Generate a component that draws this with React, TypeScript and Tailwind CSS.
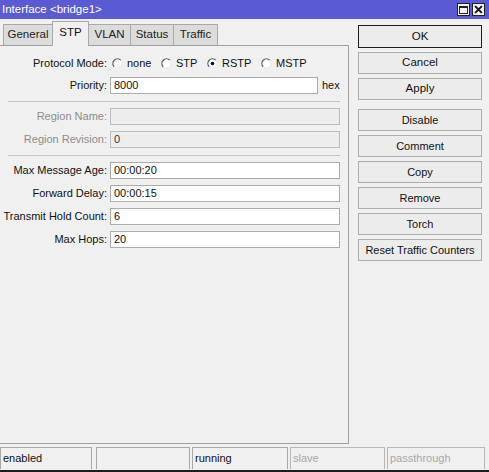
import React from 'react';

const tabs = [
  { name: 'General', w: 'w-[50px]' },
  { name: 'STP', w: 'w-[37px]', active: true },
  { name: 'VLAN', w: 'w-[43px]' },
  { name: 'Status', w: 'w-[44px]' },
  { name: 'Traffic', w: 'w-[45px]' },
];

const radios = [
  { label: 'none', w: 'w-[49px]' },
  { label: 'STP', w: 'w-[46px]' },
  { label: 'RSTP', w: 'w-[54px]', checked: true },
  { label: 'MSTP', w: 'w-[50px]' },
];

const actions = ['Disable', 'Comment', 'Copy', 'Remove', 'Torch', 'Reset Traffic Counters'];

function Radio({ checked }: { checked?: boolean }) {
  return (
    <svg width="11" height="11" viewBox="0 0 12 12" className="shrink-0">
      <circle cx="6" cy="6" r="5" fill="#ffffff" />
      <path d="M9.54 2.46 A5 5 0 0 0 2.46 9.54" fill="none" stroke="#5e5e5e" strokeWidth="1.4" />
      <path d="M2.46 9.54 A5 5 0 0 0 9.54 2.46" fill="none" stroke="#e4e4e4" strokeWidth="1" />
      {checked && <circle cx="6" cy="6" r="2" fill="#111" />}
    </svg>
  );
}

function Row({ label, value, disabled, wide = true, suffix }: { label: string; value: string; disabled?: boolean; wide?: boolean; suffix?: string }) {
  return (
    <div className="flex items-center h-[17px]">
      <div className={`w-[107px] text-right ${disabled ? 'text-[#8c8c8c]' : 'text-[#111]'}`}>{label}:</div>
      <div
        className={`ml-[3px] h-[17px] border flex items-center pl-[3px] ${wide ? 'w-[230px]' : 'w-[208px]'} ${
          disabled ? 'bg-[#ededed] border-[#bdbdbd] text-[#333]' : 'bg-white border-[#acacac] text-[#111]'
        }`}
      >
        {value}
      </div>
      {suffix && <span className="ml-[4px] text-[#111]">{suffix}</span>}
    </div>
  );
}

function Separator() {
  return <div className="ml-[8px] w-[332px] h-px bg-[#c4c4c4]" />;
}

export default function App() {
  return (
    <div className="w-[489px] h-[472px] bg-[#f0f0f0] font-['Liberation_Sans',Arial,sans-serif] text-[11px] flex flex-col overflow-hidden">
      {/* Title bar */}
      <div className="h-[19px] bg-[#5a5ad2] flex items-center justify-between pl-[2px] pr-[4px]">
        <span className="text-white text-[11.5px]">Interface &lt;bridge1&gt;</span>
        <div className="flex gap-[2px]">
          <div className="w-[13px] h-[13px] bg-[#f4f4f4] border border-[#222] flex items-center justify-center">
            <div className="w-[9px] h-[8px] border border-[#222] border-t-2" />
          </div>
          <div className="w-[13px] h-[13px] bg-[#f4f4f4] border border-[#222] flex items-center justify-center">
            <svg width="9" height="9" viewBox="0 0 8 8">
              <path d="M1 1 L7 7 M7 1 L1 7" stroke="#111" strokeWidth="1.8" />
            </svg>
          </div>
        </div>
      </div>

      <div className="flex flex-1">
        {/* Left: tabs + panel */}
        <div className="w-[349px] flex flex-col">
          <div className="h-[26px] flex items-end pl-[3px]">
            {tabs.map((t, i) => (
              <div
                key={t.name}
                className={`${t.w} ${i > 0 ? '-ml-px' : ''} flex items-center justify-center border-l border-t border-r border-[#a9a9a9] text-[11.5px] ${
                  t.active
                    ? 'h-[25px] -mb-px bg-[#f0f0f0] relative z-10 pb-[2px] text-[#111]'
                    : 'h-[21px] bg-[#dcdcdc] text-[#222]'
                }`}
              >
                {t.name}
              </div>
            ))}
          </div>
          <div className="flex-1 border-t border-r border-b border-[#a0a0a0] flex flex-col pt-[9px]">
            <div className="flex items-center h-[17px]">
              <div className="w-[107px] text-right text-[#111]">Protocol Mode:</div>
              <div className="ml-[5px] flex items-center">
                {radios.map(r => (
                  <div key={r.label} className={`${r.w} flex items-center gap-[4px] text-[#111]`}>
                    <Radio checked={r.checked} />
                    <span>{r.label}</span>
                  </div>
                ))}
              </div>
            </div>
            <div className="mt-[5px]">
              <Row label="Priority" value="8000" wide={false} suffix="hex" />
            </div>
            <div className="mt-[7px]"><Separator /></div>
            <div className="mt-[6px]"><Row label="Region Name" value="" disabled /></div>
            <div className="mt-[6px]"><Row label="Region Revision" value="0" disabled /></div>
            <div className="mt-[7px]"><Separator /></div>
            <div className="mt-[6px]"><Row label="Max Message Age" value="00:00:20" /></div>
            <div className="mt-[6px]"><Row label="Forward Delay" value="00:00:15" /></div>
            <div className="mt-[6px]"><Row label="Transmit Hold Count" value="6" /></div>
            <div className="mt-[6px]"><Row label="Max Hops" value="20" /></div>
          </div>
        </div>

        {/* Right: buttons */}
        <div className="ml-[9px] w-[124px] pt-[6px] flex flex-col gap-[4px]">
          <div className="h-[23px] border border-[#1c1c1c] bg-[#ececec] flex items-center justify-center text-[11.5px] text-[#111]">OK</div>
          {['Cancel', 'Apply'].map(b => (
            <div key={b} className="h-[22px] border border-[#adadad] bg-[#ececec] flex items-center justify-center text-[11.5px] text-[#111]">{b}</div>
          ))}
          {actions.map((b, i) => (
            <div
              key={b}
              className={`h-[22px] border border-[#adadad] bg-[#ececec] flex items-center justify-center text-[11px] text-[#111] ${i === 0 ? 'mt-[5px]' : ''}`}
            >
              {b}
            </div>
          ))}
        </div>
      </div>

      {/* Status bar */}
      <div className="h-[28px] flex flex-col">
        <div className="flex h-[22px] mt-[3px] text-[11px]">
          <div className="w-[92px] border-t border-l border-r border-[#a8a8a8] pl-[2px] flex items-center text-[#111]">enabled</div>
          <div className="ml-[4px] w-[94px] border-t border-l border-r border-[#a8a8a8]" />
          <div className="ml-[2px] w-[96px] border-t border-l border-r border-[#a8a8a8] pl-[2px] flex items-center text-[#111]">running</div>
          <div className="ml-[2px] w-[95px] border-t border-l border-r border-[#b8b8b8] pl-[2px] flex items-center text-[#a8a8a8]">slave</div>
          <div className="ml-[2px] w-[98px] border-t border-l border-r border-[#b8b8b8] pl-[2px] flex items-center text-[#a8a8a8]">passthrough</div>
        </div>
        <div className="mt-auto h-[2px] bg-[#1e1e1e]" />
      </div>
    </div>
  );
}
